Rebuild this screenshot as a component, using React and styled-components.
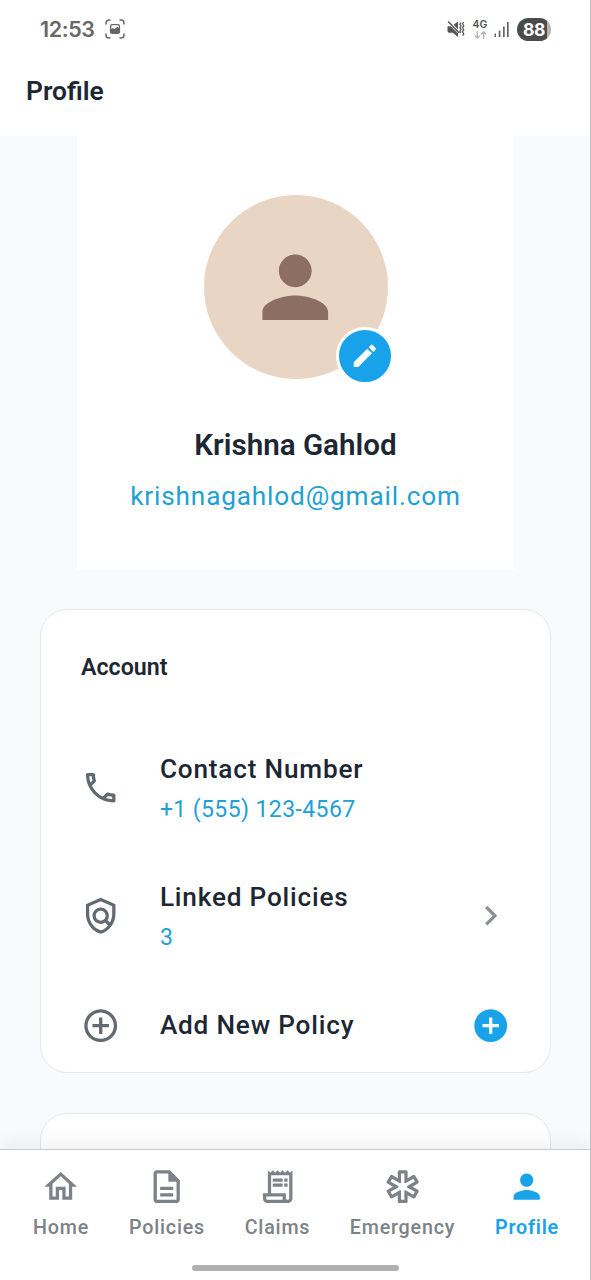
import styled, { createGlobalStyle } from "styled-components";
import {
  MdAddCircle,
  MdAddCircleOutline,
  MdChevronRight,
  MdEdit,
  MdOutlineDescription,
  MdOutlineEmergency,
  MdOutlineHome,
  MdOutlinePhone,
  MdOutlinePolicy,
  MdOutlineReceiptLong,
  MdPerson,
} from "react-icons/md";

const rows = [
  { icon: MdOutlinePhone, title: "Contact Number", value: "+1 (555) 123-4567" },
  { icon: MdOutlinePolicy, title: "Linked Policies", value: "3", action: "open" },
  { icon: MdAddCircleOutline, title: "Add New Policy", action: "add" },
];

const tabs = [
  { icon: MdOutlineHome, label: "Home", width: 56 },
  { icon: MdOutlineDescription, label: "Policies", width: 76 },
  { icon: MdOutlineReceiptLong, label: "Claims", width: 65 },
  { icon: MdOutlineEmergency, label: "Emergency", width: 105 },
  { icon: MdPerson, label: "Profile", width: 64, active: true },
];

export default function App() {
  return (
    <>
      <GlobalStyle />
      <Screen>
        <StatusBar>
          <Clock>12:53</Clock>
          <CaptureIcon />
          <StatusRight>
            <MuteIcon />
            <Network>
              4G
              <ArrowsIcon />
            </Network>
            <SignalIcon />
            <Battery>88</Battery>
          </StatusRight>
        </StatusBar>
        <Header>
          <h1>Profile</h1>
        </Header>

        <Content>
          <ProfilePanel>
            <Avatar>
              <MdPerson />
              <EditButton aria-label="Edit">
                <MdEdit />
              </EditButton>
            </Avatar>
            <Name>Krishna Gahlod</Name>
            <Email>krishnagahlod@gmail.com</Email>
          </ProfilePanel>

          <Card>
            <CardTitle>Account</CardTitle>
            {rows.map(({ icon: Icon, title, value, action }) => (
              <Row key={title} $short={!value}>
                <Icon className="lead" />
                <RowText>
                  <RowTitle>{title}</RowTitle>
                  {value && <RowValue>{value}</RowValue>}
                </RowText>
                {action === "open" && <MdChevronRight className="open" />}
                {action === "add" && <MdAddCircle className="add" />}
              </Row>
            ))}
          </Card>
          <Card />
        </Content>

        <TabBar>
          <Tabs>
            {tabs.map(({ icon: Icon, label, width, active }) => (
              <Tab key={label} $active={active} $width={width}>
                <Icon />
                <span>{label}</span>
              </Tab>
            ))}
          </Tabs>
          <HomeIndicator />
        </TabBar>
      </Screen>
    </>
  );
}

function CaptureIcon() {
  return (
    <svg width="20" height="20" viewBox="0 0 20 20" fill="none">
      <path
        d="M1 5.5V4a3 3 0 0 1 3-3h1.5M14.5 1H16a3 3 0 0 1 3 3v1.5M19 14.5V16a3 3 0 0 1-3 3h-1.5M5.5 19H4a3 3 0 0 1-3-3v-1.5"
        stroke="#666"
        strokeWidth="1.5"
      />
      <rect x="5.6" y="5.6" width="8.8" height="8.8" rx="1.6" stroke="#666" strokeWidth="1.4" />
      <path d="M5.5 10.6l2.4-1.7 1.8 1 2.6-2.2 2.3 2v4.2h-9z" fill="#666" />
    </svg>
  );
}

function MuteIcon() {
  return (
    <svg width="18" height="18" viewBox="0 0 18 18" fill="none">
      <path d="M.5 6.2h3.2L11 13.4V17l-5.2-4.2H2.2A1.7 1.7 0 0 1 .5 11.1zM6.6 4.8L11 1.4v7.8z" fill="#555" />
      <path d="M1.2 1.4l11 11.6" stroke="#555" strokeWidth="1.5" />
      <path
        d="M14 2.6l-1.2 1.6 1.3 1.8-1.3 1.8 1.3 1.8-1.3 1.8 1.2 1.6M16.7 2l-1.3 1.8 1.4 2-1.4 2 1.4 2-1.4 2 1.4 2-1.1 1.8"
        stroke="#555"
        strokeWidth="1.2"
      />
    </svg>
  );
}

function ArrowsIcon() {
  return (
    <svg width="13" height="8" viewBox="0 0 13 8" fill="none">
      <path d="M3.3 0v7M.8 4.6l2.5 2.6 2.5-2.6M9.7 8V1M7.2 3.4L9.7.8l2.5 2.6" stroke="#b0b0b0" strokeWidth="1.2" />
    </svg>
  );
}

function SignalIcon() {
  return (
    <svg width="16" height="17" viewBox="0 0 16 17">
      <path d="M.5 12.5H2V16H.5zM4.7 9.5h1.7V16H4.7zM9 5.5h1.7V16H9zM13 1h1.7v15H13z" fill="#666" />
    </svg>
  );
}

const GlobalStyle = createGlobalStyle`
  * {
    box-sizing: border-box;
  }

  body {
    margin: 0;
    background: #fff;
    font-family: Roboto, "Liberation Sans", sans-serif;
  }

  svg {
    display: block;
    flex-shrink: 0;
  }
`;

const Screen = styled.div`
  height: 1280px;
  display: flex;
  flex-direction: column;
  border-right: 1px solid #bdbdbd;
  background: #fff;
  color: #1d2733;
  overflow: hidden;
`;

const StatusBar = styled.div`
  height: 58px;
  padding: 0 39px 0 40px;
  display: flex;
  align-items: center;
  gap: 10px;
`;

const Clock = styled.span`
  width: 55px;
  font: 600 21.5px Inter, sans-serif;
  letter-spacing: -0.4px;
  color: #686868;
`;

const StatusRight = styled.div`
  margin-left: auto;
  display: flex;
  align-items: center;
`;

const Network = styled.div`
  width: 16px;
  margin: 0 6px 0 7px;
  display: flex;
  flex-direction: column;
  align-items: center;
  gap: 1px;
  font: 600 10.5px/10px Inter, sans-serif;
  color: #555;
`;

const Battery = styled.div`
  width: 34px;
  height: 23px;
  margin-left: 7px;
  border-radius: 12px;
  background: linear-gradient(90deg, #4c4c4c 30px, #b4b4b4 30px);
  color: #fff;
  font: 700 17.5px/23px Inter, sans-serif;
  letter-spacing: -0.3px;
  text-align: center;
`;

const Header = styled.header`
  height: 78px;
  padding: 17px 26px 0;

  h1 {
    margin: 0;
    font-size: 26.4px;
    font-weight: 600;
    line-height: 32px;
  }
`;

const Content = styled.main`
  flex: 1;
  min-height: 0;
  overflow: hidden;
  background: #f8fafc;
  padding: 0 39px 0 40px;
`;

const ProfilePanel = styled.section`
  width: 437px;
  height: 434px;
  margin: 0 auto 39px;
  padding-top: 59px;
  display: flex;
  flex-direction: column;
  align-items: center;
  background: #fff;
`;

const Avatar = styled.div`
  position: relative;
  width: 184px;
  height: 184px;
  border-radius: 50%;
  display: flex;
  align-items: center;
  justify-content: center;
  background: #e8d5c4;
  color: #8d6e63;

  > svg {
    width: 98.5px;
    height: 98.5px;
  }
`;

const EditButton = styled.button`
  position: absolute;
  right: -6px;
  bottom: -6px;
  width: 58px;
  height: 58px;
  padding: 0;
  border: 3px solid #fff;
  border-radius: 50%;
  display: flex;
  align-items: center;
  justify-content: center;
  background: #18a2e9;
  color: #fff;

  svg {
    width: 29.6px;
    height: 29.6px;
  }
`;

const Name = styled.h2`
  margin: 46px 0 0;
  font-size: 29.6px;
  font-weight: 600;
  line-height: 40px;
`;

const Email = styled.p`
  margin: 11px 0 0;
  font-size: 26.2px;
  line-height: 40px;
  letter-spacing: 0.84px;
  color: #229fd3;
`;

const Card = styled.section`
  height: 464px;
  margin-bottom: 40px;
  padding: 41px 40px 0;
  border: 1.5px solid #e5e7ea;
  border-radius: 27px;
  background: #fff;
`;

const CardTitle = styled.h3`
  margin: 0 0 40px;
  font-size: 23.2px;
  font-weight: 600;
  line-height: 33px;
`;

const Row = styled.div`
  height: ${(props) => (props.$short ? "91px" : "128px")};
  display: flex;
  align-items: center;

  svg {
    width: 39.4px;
    height: 39.4px;
  }

  .lead {
    color: #626970;
  }

  .open {
    color: #8b9096;
  }

  .add {
    color: #18a2e9;
  }
`;

const RowText = styled.div`
  flex: 1;
  margin-left: 39.5px;
`;

const RowTitle = styled.div`
  font-size: 26.2px;
  font-weight: 500;
  line-height: 39px;
  letter-spacing: 0.8px;
`;

const RowValue = styled.div`
  margin-top: 4px;
  font-size: 23px;
  line-height: 33px;
  letter-spacing: 0.4px;
  color: #229fd3;
`;

const TabBar = styled.nav`
  position: relative;
  height: 131px;
  border-top: 1px solid #c8cacc;
  background: #fff;
  box-shadow: 0 -4px 22px rgba(0, 0, 0, 0.07);
`;

const Tabs = styled.div`
  height: 108px;
  padding: 16.5px 0 0 2px;
  display: flex;
  justify-content: center;
  gap: 40px;
`;

const Tab = styled.div`
  width: ${(props) => props.$width}px;
  display: flex;
  flex-direction: column;
  align-items: center;
  color: ${(props) => (props.$active ? "#18a2e9" : "#7c8287")};

  svg {
    width: 39.4px;
    height: 39.4px;
  }

  span {
    margin-top: 8px;
    font-size: 19.7px;
    font-weight: ${(props) => (props.$active ? 600 : 500)};
    line-height: 28px;
    letter-spacing: 0.8px;
    white-space: nowrap;
  }
`;

const HomeIndicator = styled.div`
  width: 207px;
  height: 6px;
  margin: 7px auto 0;
  border-radius: 3px;
  background: #b0b0b0;
`;
